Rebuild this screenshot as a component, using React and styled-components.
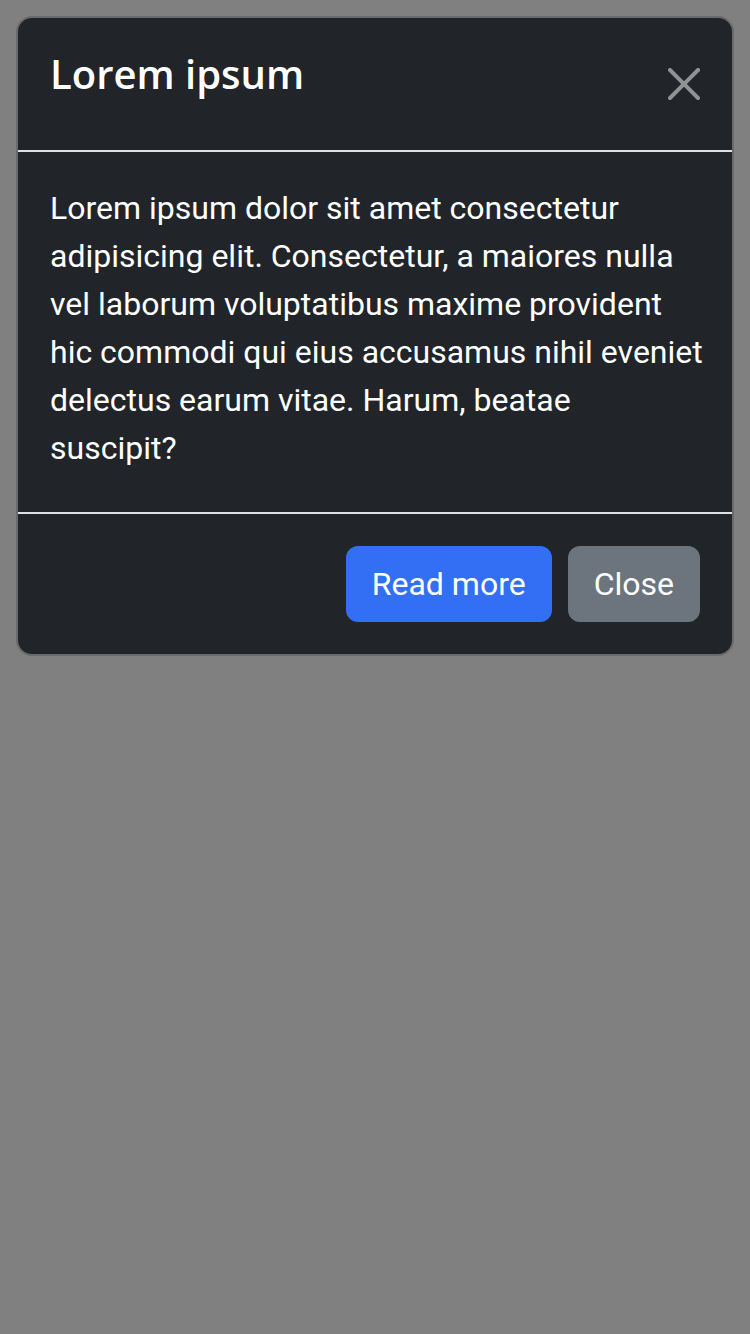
import React from "react";
import styled, { createGlobalStyle } from "styled-components";

const Global = createGlobalStyle`
  html, body {
    margin: 0;
    min-height: 100%;
    background: #808080;
  }
  body {
    font-family: Roboto, "Liberation Sans", sans-serif;
    -webkit-font-smoothing: antialiased;
  }
`;

const Backdrop = styled.div`
  min-height: 100vh;
  padding: 16px;
  box-sizing: border-box;
`;

const Modal = styled.div`
  background: #212529;
  color: #fff;
  border: 2px solid #6a6a6a;
  border-radius: 16px;
  display: flex;
  flex-direction: column;
  overflow: hidden;
`;

const Header = styled.div`
  display: flex;
  align-items: flex-start;
  padding: 32px;
  border-bottom: 2px solid #dee2e6;
`;

const Title = styled.h5`
  margin: 0;
  font-family: "Open Sans", Roboto, sans-serif;
  font-size: 40px;
  font-weight: 600;
  line-height: 48px;
`;

const CloseX = styled.button`
  width: 64px;
  height: 68px;
  margin: 0 -16px 0 auto;
  padding: 0;
  border: 0;
  background: transparent;
  display: flex;
  align-items: center;
  justify-content: center;
  opacity: 0.5;
  cursor: pointer;
`;

const Body = styled.div`
  padding: 32px 32px 40px;
`;

const Text = styled.p`
  margin: 0;
  font-size: 32px;
  line-height: 48px;
  white-space: nowrap;
`;

const Footer = styled.div`
  display: flex;
  justify-content: flex-end;
  gap: 16px;
  padding: 32px;
  border-top: 2px solid #dee2e6;
`;

const Button = styled.button`
  font-family: Roboto, sans-serif;
  font-size: 32px;
  line-height: 48px;
  padding: 12px 24px;
  border: 2px solid ${(p) => p.$bg};
  border-radius: 12px;
  background: ${(p) => p.$bg};
  color: #fff;
  cursor: pointer;
`;

const lines = [
  "Lorem ipsum dolor sit amet consectetur",
  "adipisicing elit. Consectetur, a maiores nulla",
  "vel laborum voluptatibus maxime provident",
  "hic commodi qui eius accusamus nihil eveniet",
  "delectus earum vitae. Harum, beatae",
  "suscipit?",
];

export default function App() {
  return (
    <>
      <Global />
      <Backdrop>
        <Modal>
          <Header>
            <Title>Lorem ipsum</Title>
            <CloseX aria-label="Close">
              <svg width="32" height="32" viewBox="0 0 16 16" fill="#fff">
                <path d="M.293.293a1 1 0 0 1 1.414 0L8 6.586 14.293.293a1 1 0 1 1 1.414 1.414L9.414 8l6.293 6.293a1 1 0 0 1-1.414 1.414L8 9.414l-6.293 6.293a1 1 0 0 1-1.414-1.414L6.586 8 .293 1.707a1 1 0 0 1 0-1.414" />
              </svg>
            </CloseX>
          </Header>
          <Body>
            <Text>
              {lines.map((l, i) => (
                <React.Fragment key={i}>
                  {l}
                  {i < lines.length - 1 && <br />}
                </React.Fragment>
              ))}
            </Text>
          </Body>
          <Footer>
            <Button $bg="#336ff5">Read more</Button>
            <Button $bg="#6c757d">Close</Button>
          </Footer>
        </Modal>
      </Backdrop>
    </>
  );
}
